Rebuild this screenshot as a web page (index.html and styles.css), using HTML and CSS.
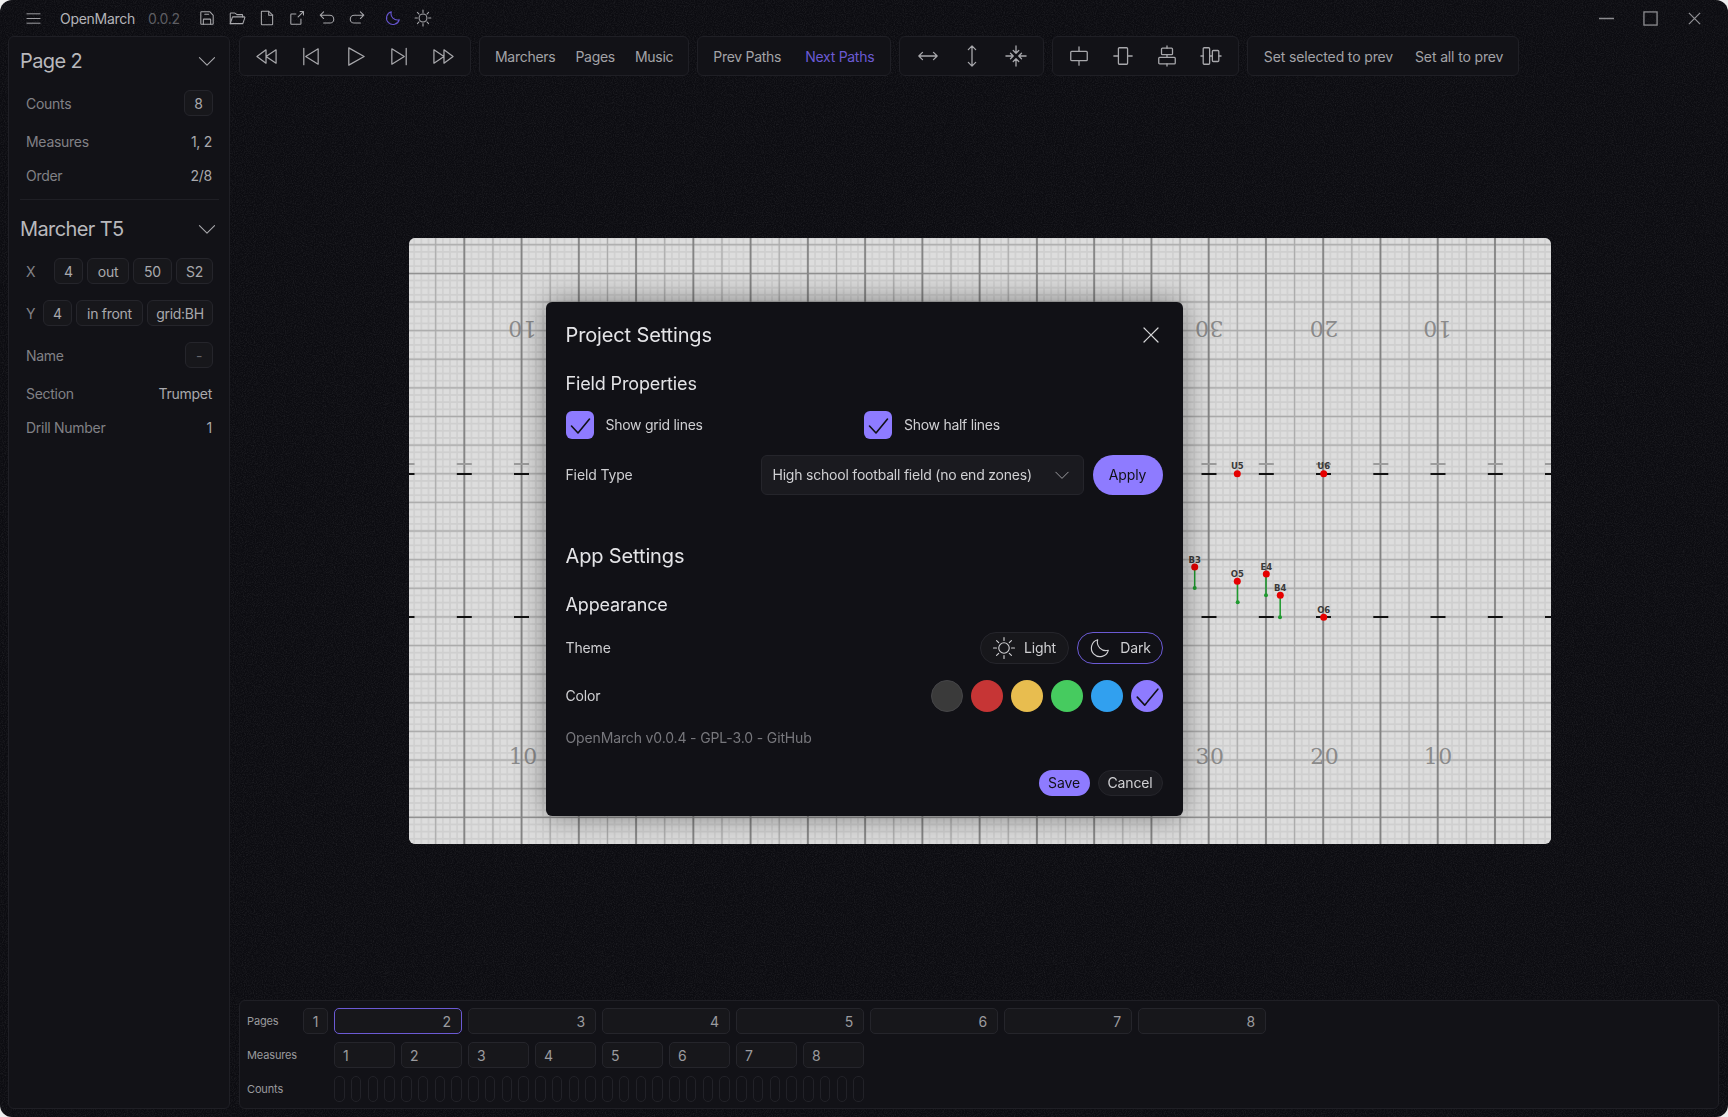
FILE: index.html
```html
<!DOCTYPE html>
<html lang="en">
<head>
    <meta charset="UTF-8">
    <title>OpenMarch</title>
    <link rel="stylesheet" href="styles.css">
</head>
<body>
<svg class="defs" width="0" height="0">
    <symbol id="i-chevron" viewBox="0 0 256 256"><polyline points="40,88 128,176 216,88"/></symbol>
    <symbol id="i-moon" viewBox="0 0 256 256"><path d="M216.7 152.6A91.9 91.9 0 0 1 103.4 39.3a92 92 0 1 0 113.3 113.3Z"/></symbol>
    <symbol id="i-sun" viewBox="0 0 256 256"><circle cx="128" cy="128" r="56"/><path d="M128 16v32M128 208v32M48.8 48.8l22.6 22.6M184.6 184.6l22.6 22.6M16 128h32M208 128h32M48.8 207.2l22.6-22.6M184.6 71.4l22.6-22.6"/></symbol>
    <symbol id="i-check" viewBox="0 0 28 28"><polyline points="5.500,15 12,22 23.500,8"/></symbol>
    <filter id="grain" x="0" y="0" width="100%" height="100%" color-interpolation-filters="sRGB">
        <feTurbulence type="fractalNoise" baseFrequency="0.9" numOctaves="2" seed="4"/>
        <feColorMatrix values="0 0 0 0 1  0 0 0 0 1  0 0 0 0 1  0.14 0 0 0 -0.055"/>
    </filter>
</svg>

<div class="app">
    <svg class="noise" width="1728" height="1117"><rect width="1728" height="1117" filter="url(#grain)"/></svg>
    <div class="titlebar">
        <svg class="bar-icon menu-icon" viewBox="0 0 16 16"><path d="M1 3h14M1 8h14M1 13h14"/></svg>
        <span class="app-name">OpenMarch</span>
        <span class="app-version">0.0.2</span>
        <div class="title-icons">
            <svg class="bar-icon" viewBox="0 0 256 256"><path d="M216 91.3V208a8 8 0 0 1-8 8H48a8 8 0 0 1-8-8V48a8 8 0 0 1 8-8h116.7a8 8 0 0 1 5.6 2.3l43.4 43.4a8 8 0 0 1 2.3 5.6Z"/><path d="M76 216v-64a8 8 0 0 1 8-8h88a8 8 0 0 1 8 8v64M152 76H96"/></svg>
            <svg class="bar-icon" viewBox="0 0 256 256"><path d="M32 208V64a8 8 0 0 1 8-8h53.3a8 8 0 0 1 4.8 1.6L128 80h72a8 8 0 0 1 8 8v24"/><path d="M32 208l30.2-90.5a8 8 0 0 1 7.6-5.5H232a8 8 0 0 1 7.6 10.5L211 208Z"/></svg>
            <svg class="bar-icon" viewBox="0 0 256 256"><path d="M200 224H56a8 8 0 0 1-8-8V40a8 8 0 0 1 8-8h96l56 56v128a8 8 0 0 1-8 8Z"/><path d="M152 32v56h56"/></svg>
            <svg class="bar-icon" viewBox="0 0 256 256"><path d="M172 36h48v48M220 36l-76 76M184 144v64a8 8 0 0 1-8 8H48a8 8 0 0 1-8-8V80a8 8 0 0 1 8-8h64"/></svg>
            <svg class="bar-icon" viewBox="0 0 256 256"><path d="M80 136 32 88l48-48M32 88h136a56 56 0 0 1 0 112H80"/></svg>
            <svg class="bar-icon" viewBox="0 0 256 256"><path d="m176 136 48-48-48-48M224 88H88a56 56 0 0 0 0 112h88"/></svg>
            <svg class="bar-icon moon-active"><use href="#i-moon"/></svg>
            <svg class="bar-icon"><use href="#i-sun"/></svg>
        </div>
        <div class="window-controls">
            <svg class="win-icon" viewBox="0 0 16 16"><path d="M0 8h16"/></svg>
            <svg class="win-icon" viewBox="0 0 16 16"><rect x="1" y="1" width="14" height="14"/></svg>
            <svg class="win-icon" viewBox="0 0 16 16"><path d="M2 2l12 12M14 2 2 14"/></svg>
        </div>
    </div>

    <div class="workspace">
        <aside class="sidebar">
            <div class="side-head">
                <h2>Page 2</h2>
                <svg class="chevron"><use href="#i-chevron"/></svg>
            </div>
            <div class="side-row row-counts"><span>Counts</span><span class="box w-29">8</span></div>
            <div class="side-row row-plain"><span>Measures</span><span class="value">1, 2</span></div>
            <div class="side-row row-plain"><span>Order</span><span class="value">2/8</span></div>
            <hr class="side-divider">
            <div class="side-head head-marcher">
                <h2>Marcher T5</h2>
                <svg class="chevron"><use href="#i-chevron"/></svg>
            </div>
            <div class="side-row coord-row">
                <span>X</span>
                <div class="boxes"><span class="box w-29">4</span><span class="box w-42">out</span><span class="box w-39">50</span><span class="box w-37">S2</span></div>
            </div>
            <div class="side-row coord-row">
                <span>Y</span>
                <div class="boxes"><span class="box w-29">4</span><span class="box w-67">in front</span><span class="box w-66">grid:BH</span></div>
            </div>
            <div class="side-row coord-row"><span>Name</span><span class="box box-empty w-28">-</span></div>
            <div class="side-row row-plain"><span>Section</span><span class="value">Trumpet</span></div>
            <div class="side-row row-plain"><span>Drill Number</span><span class="value">1</span></div>
        </aside>

        <main class="main">
            <div class="toolbar">
                <div class="tool-group play-group">
                    <svg class="tool-icon" viewBox="0 0 24 24"><path d="M11.500 5 2 12l9.500 7ZM22 5l-10.500 7 10.500 7Z"/></svg>
                    <svg class="tool-icon" viewBox="0 0 24 24"><path d="M5 3.500v17M20 4 7 12l13 8Z"/></svg>
                    <svg class="tool-icon" viewBox="0 0 24 24"><path d="M5 3v18l16-9Z"/></svg>
                    <svg class="tool-icon" viewBox="0 0 24 24"><path d="M19 3.500v17M4 4l13 8-13 8Z"/></svg>
                    <svg class="tool-icon" viewBox="0 0 24 24"><path d="M2 5l10.500 7L2 19ZM12.500 5 22 12l-9.500 7Z"/></svg>
                </div>
                <div class="tool-group text-group">
                    <span>Marchers</span><span>Pages</span><span>Music</span>
                </div>
                <div class="tool-group text-group paths-group">
                    <span>Prev Paths</span><span class="active">Next Paths</span>
                </div>
                <div class="tool-group icon-group">
                    <svg class="tool-icon small" viewBox="0 0 24 24"><path d="M2 12h20M6 8l-4 4 4 4M18 8l4 4-4 4"/></svg>
                    <svg class="tool-icon small" viewBox="0 0 24 24"><path d="M12 1v22M8 5l4-4 4 4M8 19l4 4 4-4"/></svg>
                    <svg class="tool-icon small" viewBox="0 0 24 24"><path d="M12 1v8M9 6l3 3 3-3M12 23v-8M9 18l3-3 3 3M1 12h8M6 9l3 3-3 3M23 12h-8M18 9l-3 3 3 3"/></svg>
                </div>
                <div class="tool-group icon-group align-group">
                    <svg class="tool-icon small" viewBox="0 0 24 24"><rect x="3" y="7" width="18" height="10" rx="1"/><path d="M12 2v5M12 17v5"/></svg>
                    <svg class="tool-icon small" viewBox="0 0 24 24"><rect x="7" y="3" width="10" height="18" rx="1"/><path d="M2 12h5M17 12h5"/></svg>
                    <svg class="tool-icon small" viewBox="0 0 24 24"><rect x="6" y="3.500" width="12" height="7" rx="1"/><rect x="3" y="13.500" width="18" height="7" rx="1"/><path d="M12 1v2.500M12 10.500v3M12 20.500V23"/></svg>
                    <svg class="tool-icon small" viewBox="0 0 24 24"><rect x="3.500" y="3" width="7" height="18" rx="1"/><rect x="13.500" y="6" width="7" height="12" rx="1"/><path d="M1 12h2.500M10.500 12h3M20.500 12H23"/></svg>
                </div>
                <div class="tool-group text-group prev-group">
                    <span>Set selected to prev</span><span>Set all to prev</span>
                </div>
            </div>

            <div class="canvas-area">
                <svg class="field" width="1142" height="606" viewBox="0 0 1142 606">
                    <defs>
                        <pattern id="fine" patternUnits="userSpaceOnUse" x="1.62" y="3.12" width="7.1575" height="7.1575">
                            <path d="M3.58 0v7.1575M0 3.58h7.1575"/>
                        </pattern>
                        <pattern id="mid" patternUnits="userSpaceOnUse" x="12.355" y="-7.6" width="28.63" height="28.63">
                            <path d="M14.315 0v28.63M0 14.315h28.63"/>
                        </pattern>
                        <pattern id="yard" patternUnits="userSpaceOnUse" x="26.67" y="0" width="57.26" height="606">
                            <path d="M28.63 0v606"/>
                        </pattern>
                    </defs>
                    <rect class="f-base" width="1142" height="606"/>
                    <rect class="f-fine" width="1142" height="606"/>
                    <rect class="f-mid" width="1142" height="606"/>
                    <rect class="f-yard" width="1142" height="606"/>
                    <path class="f-dark" d="M0 579.300h1142M0 35.700h1142"/>
                    <path class="hash-faint" d="M47.800 226h15M105 226h15M162.300 226h15M792.500 226h15M849.800 226h15M907 226h15M964.300 226h15M1021.500 226h15M1078.800 226h15M1136 226h6M0 226h5.500"/>
                    <path class="hash" d="M0 236h5.500M47.800 236h15M105 236h15M162.300 236h15M792.500 236h15M849.800 236h15M907 236h15M964.300 236h15M1021.500 236h15M1078.800 236h15M1136 236h6M0 379h5.500M47.800 379h15M105 379h15M162.300 379h15M792.500 379h15M849.800 379h15M907 379h15M964.300 379h15M1021.500 379h15M1078.800 379h15M1136 379h6"/>
                    <g class="f-num">
                        <text x="114.300" y="526">10</text>
                        <text x="801" y="526">30</text>
                        <text x="915.700" y="526">20</text>
                        <text x="1029.300" y="526">10</text>
                        <text x="113.300" y="99" transform="rotate(180 113.300 91)">10</text>
                        <text x="800" y="99" transform="rotate(180 800 91)">30</text>
                        <text x="914.700" y="99" transform="rotate(180 914.700 91)">20</text>
                        <text x="1028.300" y="99" transform="rotate(180 1028.300 91)">10</text>
                    </g>
                    <path class="trail" d="M785.700 329v21M828.500 343.300v21M857 336v21.300M871.200 357.300v22"/>
                    <g class="trail-end">
                        <circle cx="785.700" cy="350" r="2"/><circle cx="828.700" cy="364.300" r="2"/>
                        <circle cx="857" cy="357.300" r="2"/><circle cx="871" cy="379.300" r="2"/>
                    </g>
                    <g class="marker">
                        <circle cx="828.300" cy="235.700" r="3.500"/><circle cx="914.700" cy="235.700" r="3.500"/>
                        <circle cx="785.700" cy="329" r="3.500"/><circle cx="828.300" cy="343.300" r="3.500"/>
                        <circle cx="857.300" cy="336" r="3.500"/><circle cx="871.300" cy="357.300" r="3.500"/>
                        <circle cx="914.700" cy="379.300" r="3.500"/>
                    </g>
                    <g class="marker-label">
                        <text x="828.300" y="231.300">U5</text><text x="914.700" y="231.300">U6</text>
                        <text x="785.700" y="324.500">B3</text><text x="828.300" y="338.800">O5</text>
                        <text x="857.300" y="331.500">E4</text><text x="871.300" y="352.800">B4</text>
                        <text x="914.700" y="374.800">O6</text>
                    </g>
                </svg>
            </div>

            <div class="timeline">
                <div class="tl-row">
                    <span class="tl-label">Pages</span>
                    <div class="tl-cells">
                        <span class="cell page-first">1</span>
                        <span class="cell page-cell current">2</span>
                        <span class="cell page-cell">3</span>
                        <span class="cell page-cell">4</span>
                        <span class="cell page-cell">5</span>
                        <span class="cell page-cell">6</span>
                        <span class="cell page-cell">7</span>
                        <span class="cell page-cell">8</span>
                    </div>
                </div>
                <div class="tl-row">
                    <span class="tl-label">Measures</span>
                    <div class="tl-cells tl-offset">
                        <span class="cell measure">1</span><span class="cell measure">2</span>
                        <span class="cell measure">3</span><span class="cell measure">4</span>
                        <span class="cell measure">5</span><span class="cell measure">6</span>
                        <span class="cell measure">7</span><span class="cell measure">8</span>
                    </div>
                </div>
                <div class="tl-row">
                    <span class="tl-label">Counts</span>
                    <div class="tl-cells tl-offset count-cells">
                        <i></i><i></i><i></i><i></i><i></i><i></i><i></i><i></i>
                        <i></i><i></i><i></i><i></i><i></i><i></i><i></i><i></i>
                        <i></i><i></i><i></i><i></i><i></i><i></i><i></i><i></i>
                        <i></i><i></i><i></i><i></i><i></i><i></i><i></i><i></i>
                    </div>
                </div>
            </div>
        </main>
    </div>
</div>

<div class="modal-layer">
    <div class="modal">
        <div class="modal-head">
            <h2>Project Settings</h2>
            <svg class="close-icon" viewBox="0 0 16 16"><path d="M1 1l14 14M15 1 1 15"/></svg>
        </div>
        <h3>Field Properties</h3>
        <div class="check-row">
            <label class="check"><span class="checkbox"><svg><use href="#i-check"/></svg></span>Show grid lines</label>
            <label class="check"><span class="checkbox"><svg><use href="#i-check"/></svg></span>Show half lines</label>
        </div>
        <div class="field-type">
            <span>Field Type</span>
            <div class="field-type-controls">
                <div class="select">High school football field (no end zones)<svg class="chevron small"><use href="#i-chevron"/></svg></div>
                <button class="btn-primary apply">Apply</button>
            </div>
        </div>
        <h2 class="app-settings">App Settings</h2>
        <h3 class="appearance">Appearance</h3>
        <div class="setting-row theme-row">
            <span>Theme</span>
            <div class="theme-buttons">
                <span class="theme-btn btn-light"><svg><use href="#i-sun"/></svg>Light</span>
                <span class="theme-btn selected"><svg><use href="#i-moon"/></svg>Dark</span>
            </div>
        </div>
        <div class="setting-row color-row">
            <span>Color</span>
            <div class="swatches">
                <i class="swatch sw-gray"></i><i class="swatch sw-red"></i><i class="swatch sw-yellow"></i>
                <i class="swatch sw-green"></i><i class="swatch sw-blue"></i>
                <i class="swatch sw-purple"><svg><use href="#i-check"/></svg></i>
            </div>
        </div>
        <p class="version">OpenMarch v0.0.4 - GPL-3.0 - GitHub</p>
        <div class="modal-actions">
            <button class="btn-primary save">Save</button>
            <button class="btn-cancel">Cancel</button>
        </div>
    </div>
</div>
</body>
</html>
```
FILE: styles.css
```css
* {
    box-sizing: border-box;
}

html, body {
    margin: 0;
    height: 100%;
    overflow: hidden;
    background: #eeeeee;
}

body {
    font-family: "Inter", "Liberation Sans", sans-serif;
    font-size: 14px;
    letter-spacing: -0.01em;
    color: #a9a9ad;
}

svg {
    fill: none;
    stroke: currentColor;
    stroke-linecap: round;
    stroke-linejoin: round;
}

.defs {
    position: absolute;
}

.app {
    position: relative;
    display: flex;
    flex-direction: column;
    height: 1117px;
    background: #0c0c11;
    border-radius: 12px;
    overflow: hidden;
}

.noise {
    position: absolute;
    top: 0;
    left: 0;
    stroke: none;
}

.titlebar, .workspace {
    position: relative;
}

/* title bar */
.titlebar {
    display: flex;
    align-items: center;
    height: 36px;
    padding-left: 26px;
    flex-shrink: 0;
}

.bar-icon {
    width: 18px;
    height: 18px;
    stroke-width: 15;
    color: #a8a8ac;
}

.menu-icon {
    width: 15px;
    height: 15px;
    stroke-width: 1;
}

.app-name {
    margin-left: 19px;
    color: #b4b4b8;
    letter-spacing: -0.02em;
}

.app-version {
    margin-left: 13px;
    color: #5e5e63;
    letter-spacing: -0.02em;
}

.title-icons {
    display: flex;
    gap: 12px;
    margin-left: 18px;
}

.moon-active {
    margin-left: 6px;
    color: #6655cf;
    stroke-width: 16;
}

.window-controls {
    display: flex;
    gap: 29px;
    margin-left: auto;
    padding-right: 26px;
}

.win-icon {
    width: 15px;
    height: 15px;
    stroke-width: 1.4;
    color: #8c8c90;
    stroke-linecap: butt;
    stroke-linejoin: miter;
}

/* page layout */
.workspace {
    display: flex;
    flex: 1;
    gap: 9px;
    padding: 0 9px 8px 8px;
    min-height: 0;
}

.sidebar {
    width: 222px;
    flex-shrink: 0;
    padding: 12px 16px 0 11px;
    background: #121217;
    border: 1px solid #1f1f25;
    border-radius: 6px;
    letter-spacing: -0.02em;
}

.side-head {
    display: flex;
    align-items: center;
    justify-content: space-between;
    height: 24px;
}

.head-marcher {
    margin-top: 17px;
}

.side-head h2 {
    margin: 0;
    font-size: 20px;
    font-weight: 400;
    letter-spacing: -0.03em;
    color: #b8b8bc;
}

.chevron {
    width: 22px;
    height: 22px;
    stroke-width: 13;
    color: #a8a8ac;
    margin-right: -5px;
}

.chevron.small {
    width: 18px;
    height: 18px;
    margin: 0;
}

.side-row {
    display: flex;
    align-items: center;
    justify-content: space-between;
    padding-left: 6px;
    color: #818186;
}

.side-row .value {
    padding-right: 1px;
    color: #a9a9ad;
}

.box {
    display: inline-flex;
    align-items: center;
    justify-content: center;
    height: 26px;
    background: #17171b;
    border: 1px solid #25252b;
    border-radius: 6px;
    color: #a9a9ad;
}

.box-empty {
    color: #66666b;
}

.w-28 { width: 28px; }
.w-29 { width: 29px; }
.w-37 { width: 37px; }
.w-39 { width: 39px; }
.w-42 { width: 42px; }
.w-66 { width: 66px; }
.w-67 { width: 67px; }

.row-counts {
    margin-top: 17px;
}

.row-plain {
    margin-top: 16px;
    height: 18px;
}

.side-divider {
    margin: 15px -6px 0 0;
    border: 0;
    border-top: 1px solid #1f1f25;
}

.coord-row {
    margin-top: 16px;
}

.head-marcher + .coord-row {
    margin-top: 17px;
}

.boxes {
    display: flex;
    gap: 4px;
}

.main {
    display: flex;
    flex-direction: column;
    flex: 1;
    min-width: 0;
}

/* toolbar */
.toolbar {
    display: flex;
    gap: 8px;
    height: 40px;
    flex-shrink: 0;
}

.tool-group {
    display: flex;
    align-items: center;
    background: #121217;
    border: 1px solid #1f1f25;
    border-radius: 6px;
}

.play-group {
    width: 232px;
    padding: 0 15px;
    justify-content: space-between;
}

.tool-icon {
    width: 23px;
    height: 23px;
    stroke-width: 1.3;
    color: #a8a8ac;
}

.tool-icon.small {
    width: 22px;
    height: 22px;
    stroke-width: 1.4;
}

.text-group {
    padding: 0 15px;
    gap: 20px;
    color: #a3a3a7;
    letter-spacing: -0.02em;
}

.paths-group {
    padding: 0 16px 0 15px;
    gap: 24px;
}

.text-group .active {
    color: #6b5ad4;
}

.icon-group {
    padding: 0 16.25px;
    gap: 22px;
}

.align-group {
    padding: 0 15.5px;
}

.prev-group {
    padding: 0 15px 0 16px;
    gap: 22px;
    letter-spacing: -0.01em;
}

/* field */
.canvas-area {
    flex: 1;
    display: flex;
    align-items: center;
    justify-content: center;
    padding: 5px 0 0 2px;
    min-height: 0;
}

.field {
    border-radius: 6px;
    flex-shrink: 0;
    stroke-linecap: butt;
}

.f-base {
    fill: #dddddd;
    stroke: none;
}

.f-fine {
    fill: url(#fine);
    stroke: none;
}

.f-mid {
    fill: url(#mid);
    stroke: none;
}

.f-yard {
    fill: url(#yard);
    stroke: none;
}

#fine path {
    stroke: #cfcfcf;
    stroke-width: 1.6;
}

#mid path {
    stroke: #aaaaaa;
    stroke-width: 1.3;
}

#yard path {
    stroke: #5a5a5a;
    stroke-width: 1;
}

.f-dark {
    stroke: #8a8a8a;
    stroke-width: 1;
}

.hash {
    stroke: #111;
    stroke-width: 2;
}

.hash-faint {
    stroke: #9c9c9c;
    stroke-width: 2;
}

.f-num text {
    font-family: "DejaVu Serif", serif;
    font-size: 22px;
    letter-spacing: 0.5px;
    text-anchor: middle;
    fill: #8a8a8a;
    stroke: none;
}

.trail {
    stroke: #1f9a2f;
    stroke-width: 1.5;
}

.trail-end {
    fill: #1f9a2f;
    stroke: none;
}

.marker {
    fill: #e60000;
    stroke: none;
}

.marker-label text {
    font-family: "DejaVu Sans", sans-serif;
    font-size: 8.500px;
    font-weight: 700;
    letter-spacing: 0;
    text-anchor: middle;
    fill: #3a3a3a;
    stroke: none;
}

/* timeline */
.timeline {
    height: 109px;
    flex-shrink: 0;
    padding: 7px 0 0 7px;
    background: #121217;
    border: 1px solid #1f1f25;
    border-radius: 6px;
}

.tl-row {
    display: flex;
    align-items: center;
    height: 26px;
    margin-bottom: 8px;
}

.tl-label {
    width: 56px;
    flex-shrink: 0;
    font-size: 11px;
    color: #9a9a9e;
}

.tl-cells {
    display: flex;
    gap: 6px;
}

.tl-offset {
    margin-left: 31px;
}

.cell {
    display: flex;
    align-items: center;
    height: 26px;
    padding: 0 8px;
    background: #17171b;
    border: 1px solid #25252b;
    border-radius: 5px;
    color: #9b9b9f;
}

.page-first {
    width: 25px;
    justify-content: center;
    padding: 0;
}

.page-cell {
    width: 128px;
    justify-content: flex-end;
    padding-right: 10px;
}

.page-cell.current {
    border-color: #6b5ad4;
}

.measure {
    width: 61px;
}

.count-cells {
    gap: 6.25px;
}

.count-cells i {
    width: 10.5px;
    height: 26px;
    border: 1px solid #222228;
    border-radius: 5px;
}

/* settings dialog */
.modal-layer {
    position: fixed;
    inset: 0;
    display: flex;
    align-items: center;
    justify-content: center;
}

.modal {
    width: 637px;
    height: 514px;
    padding: 20px;
    background: #111116;
    border-radius: 6px;
    box-shadow: 0 0 30px rgba(0, 0, 0, 0.45);
    color: #e4e4e7;
}

.modal h2 {
    margin: 0;
    font-size: 20px;
    line-height: 24px;
    font-weight: 400;
}

.modal h3 {
    margin: 0;
    font-size: 18px;
    line-height: 22px;
    font-weight: 400;
}

.modal-head {
    display: flex;
    align-items: center;
    justify-content: space-between;
    height: 26px;
    margin-bottom: 25px;
}

.close-icon {
    width: 16px;
    height: 16px;
    margin-right: 4px;
    stroke-width: 1.2;
    color: #d8d8da;
}

.check-row {
    display: flex;
    margin-top: 16px;
}

.check {
    display: flex;
    align-items: center;
    gap: 12px;
    width: 299px;
    color: #cfcfd2;
    letter-spacing: -0.02em;
}

.checkbox {
    width: 28px;
    height: 28px;
    background: #8e7bff;
    border-radius: 6px;
    color: #111116;
}

.checkbox svg {
    display: block;
    width: 28px;
    height: 28px;
    stroke-width: 1.6;
}

.field-type {
    display: flex;
    align-items: center;
    justify-content: space-between;
    margin-top: 16px;
    color: #cfcfd2;
}

.field-type-controls {
    display: flex;
    gap: 9px;
}

.select {
    display: flex;
    align-items: center;
    justify-content: space-between;
    width: 323px;
    height: 40px;
    padding: 0 12px 0 11px;
    background: #1a1a1f;
    border: 1px solid #25252b;
    border-radius: 6px;
    color: #d0d0d3;
    letter-spacing: -0.015em;
}

.btn-primary {
    font: inherit;
    letter-spacing: inherit;
    background: #8e7bff;
    color: #111116;
    border: 0;
    border-radius: 20px;
}

.apply {
    width: 70px;
    height: 40px;
}

.modal .app-settings {
    margin-top: 49px;
}

.modal .appearance {
    margin-top: 26px;
}

.setting-row {
    display: flex;
    align-items: center;
    justify-content: space-between;
    color: #cfcfd2;
}

.theme-row {
    margin-top: 16px;
}

.theme-buttons {
    display: flex;
    gap: 8px;
}

.theme-btn {
    display: flex;
    align-items: center;
    justify-content: center;
    gap: 8px;
    width: 86px;
    height: 32px;
    background: #17171b;
    border: 1px solid #25252b;
    border-radius: 16px;
}

.btn-light {
    width: 89px;
}

.theme-btn svg {
    width: 24px;
    height: 24px;
    stroke-width: 12;
}

.theme-btn.selected {
    border-color: #6b5ad4;
    background: #111116;
}

.color-row {
    margin-top: 16px;
}

.swatches {
    display: flex;
    gap: 8px;
}

.swatch {
    display: block;
    width: 32px;
    height: 32px;
    border-radius: 50%;
}

.sw-gray { background: #3a3a3a; border: 1px solid #454548; }
.sw-red { background: #c63535; }
.sw-yellow { background: #e8bd4f; }
.sw-green { background: #46cb5f; }
.sw-blue { background: #31a0ef; }
.sw-purple { background: #8e7bff; color: #111116; }

.swatch svg {
    display: block;
    width: 32px;
    height: 32px;
    stroke-width: 1.4;
}

.version {
    margin: 17px 0 0;
    line-height: 17px;
    color: #77777c;
}

.modal-actions {
    display: flex;
    justify-content: flex-end;
    gap: 8px;
    margin-top: 24px;
}

.save {
    width: 51px;
    height: 26px;
}

.btn-cancel {
    width: 65px;
    height: 26px;
    font: inherit;
    letter-spacing: inherit;
    background: #1a1a1f;
    color: #cfcfd2;
    border: 1px solid #25252b;
    border-radius: 13px;
}
```
